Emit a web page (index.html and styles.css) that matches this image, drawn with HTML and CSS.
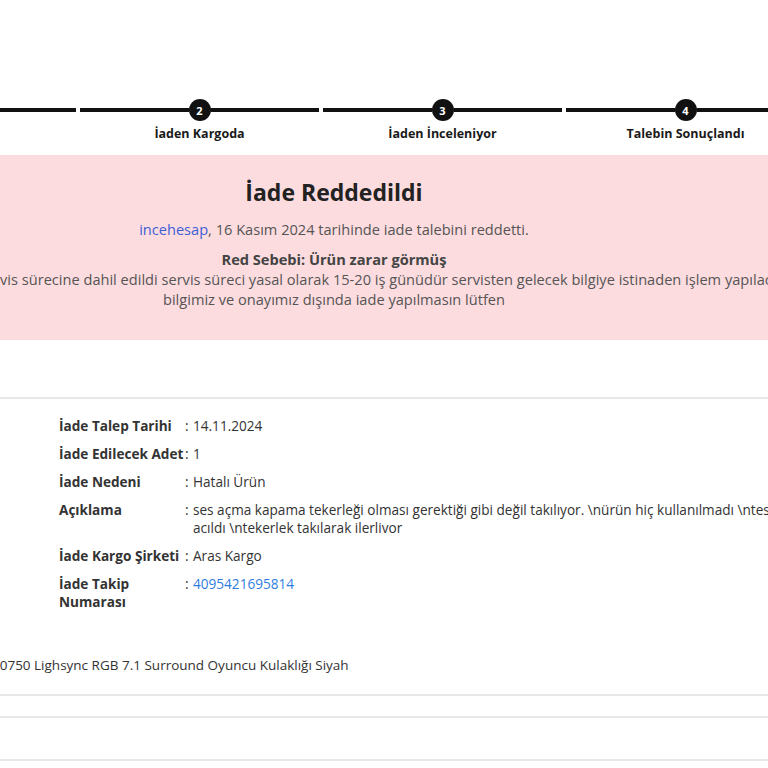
FILE: index.html
```html
<!DOCTYPE html>
<html lang="tr">

<head>
    <meta charset="UTF-8">
    <meta name="viewport" content="width=device-width, initial-scale=1.0">
    <title>İade Detayı</title>
    <link rel="stylesheet" href="styles.css">
</head>

<body>
    <div class="page">
        <div class="steps">
            <div class="step">
                <div class="track"><span class="bar"></span><span class="num">1</span><span class="bar"></span></div>
                <div class="label">Talebini Aldık</div>
            </div>
            <div class="step">
                <div class="track"><span class="bar"></span><span class="num">2</span><span class="bar"></span></div>
                <div class="label">İaden Kargoda</div>
            </div>
            <div class="step">
                <div class="track"><span class="bar"></span><span class="num">3</span><span class="bar"></span></div>
                <div class="label">İaden İnceleniyor</div>
            </div>
            <div class="step">
                <div class="track"><span class="bar"></span><span class="num">4</span><span class="bar"></span></div>
                <div class="label">Talebin Sonuçlandı</div>
            </div>
        </div>

        <div class="status">
            <h2>İade Reddedildi</h2>
            <p class="who"><a href="#">incehesap</a>, 16 Kasım 2024 tarihinde iade talebini reddetti.</p>
            <p class="reason">Red Sebebi: Ürün zarar görmüş</p>
            <p class="note">Ürününüz teknik servis sürecine dahil edildi servis süreci yasal olarak 15-20 iş günüdür servisten gelecek bilgiye istinaden işlem yapılacaktır.<br>bilgimiz ve onayımız dışında iade yapılmasın lütfen</p>
        </div>

        <div class="details">
            <div class="row">
                <div class="key">İade Talep Tarihi</div>
                <div class="colon">:</div>
                <div class="val">14.11.2024</div>
            </div>
            <div class="row">
                <div class="key">İade Edilecek Adet</div>
                <div class="colon">:</div>
                <div class="val">1</div>
            </div>
            <div class="row">
                <div class="key">İade Nedeni</div>
                <div class="colon">:</div>
                <div class="val">Hatalı Ürün</div>
            </div>
            <div class="row">
                <div class="key">Açıklama</div>
                <div class="colon">:</div>
                <div class="val">ses açma kapama tekerleği olması gerektiği gibi değil takılıyor. \nürün hiç kullanılmadı \ntest edilmek için kutusu acıldı \ntekerlek takılarak ilerlivor</div>
            </div>
            <div class="row">
                <div class="key">İade Kargo Şirketi</div>
                <div class="colon">:</div>
                <div class="val">Aras Kargo</div>
            </div>
            <div class="row">
                <div class="key">İade Takip Numarası</div>
                <div class="colon">:</div>
                <div class="val"><a href="#">4095421695814</a></div>
            </div>
        </div>

        <div class="product">Logitech G G0750 Lighsync RGB 7.1 Surround Oyuncu Kulaklığı Siyah</div>
        <div class="rule"></div>
        <div class="rule"></div>
        <div class="rule tall"></div>
    </div>
</body>

</html>
```

FILE: styles.css
```css
body {
    margin: 0;
    overflow: hidden;
    background: #fff;
    font-family: "Open Sans", sans-serif;
    color: #333;
}

a {
    text-decoration: none;
}

.page {
    width: 1000px;
    margin-left: -166px;
}

/* progress steps */
.steps {
    display: flex;
    gap: 4px;
    padding: 99px 0 0 3px;
}

.step {
    width: 239px;
    display: flex;
    flex-direction: column;
    align-items: center;
}

.track {
    width: 100%;
    display: flex;
    align-items: center;
}

.bar {
    flex: 1;
    height: 4px;
    background: #111;
}

.num {
    width: 22px;
    height: 22px;
    border-radius: 50%;
    background: #111;
    color: #fff;
    font-size: 11px;
    font-weight: 700;
    display: flex;
    align-items: center;
    justify-content: center;
}

.label {
    margin-top: 4px;
    font-size: 12.5px;
    font-weight: 700;
    color: #1a1a1a;
}

/* status box */
.status {
    margin-top: 13px;
    background: #fddcdf;
    text-align: center;
    padding: 22px 0 31px;
    color: #555;
}

.status h2 {
    margin: 0;
    font-size: 23px;
    line-height: 30px;
    color: #222;
}

.status p {
    margin: 0;
    font-size: 14.6px;
    line-height: 20px;
}

.status .who {
    margin-top: 12px;
}

.who a {
    color: #3f5fd6;
}

.status .reason {
    margin-top: 10px;
    font-weight: 700;
    color: #444;
}

/* details */
.details {
    margin-top: 57px;
    border-top: 2px solid #e8e8e8;
    padding: 18px 0 0 225px;
}

.row {
    display: flex;
    font-size: 13.6px;
    line-height: 18px;
    margin-bottom: 10px;
}

.key {
    flex: none;
    width: 126px;
    font-weight: 700;
    color: #333;
}

.colon {
    flex: none;
    width: 8px;
}

.val {
    flex: none;
    width: 740px;
}

.val a {
    color: #2f7de1;
}

.product {
    margin-top: 45px;
    font-size: 13.5px;
    line-height: 18px;
    padding-left: 86px;
}

.rule {
    height: 20px;
    border-bottom: 2px solid #e8e8e8;
}

.rule.tall {
    height: 41px;
}
```
